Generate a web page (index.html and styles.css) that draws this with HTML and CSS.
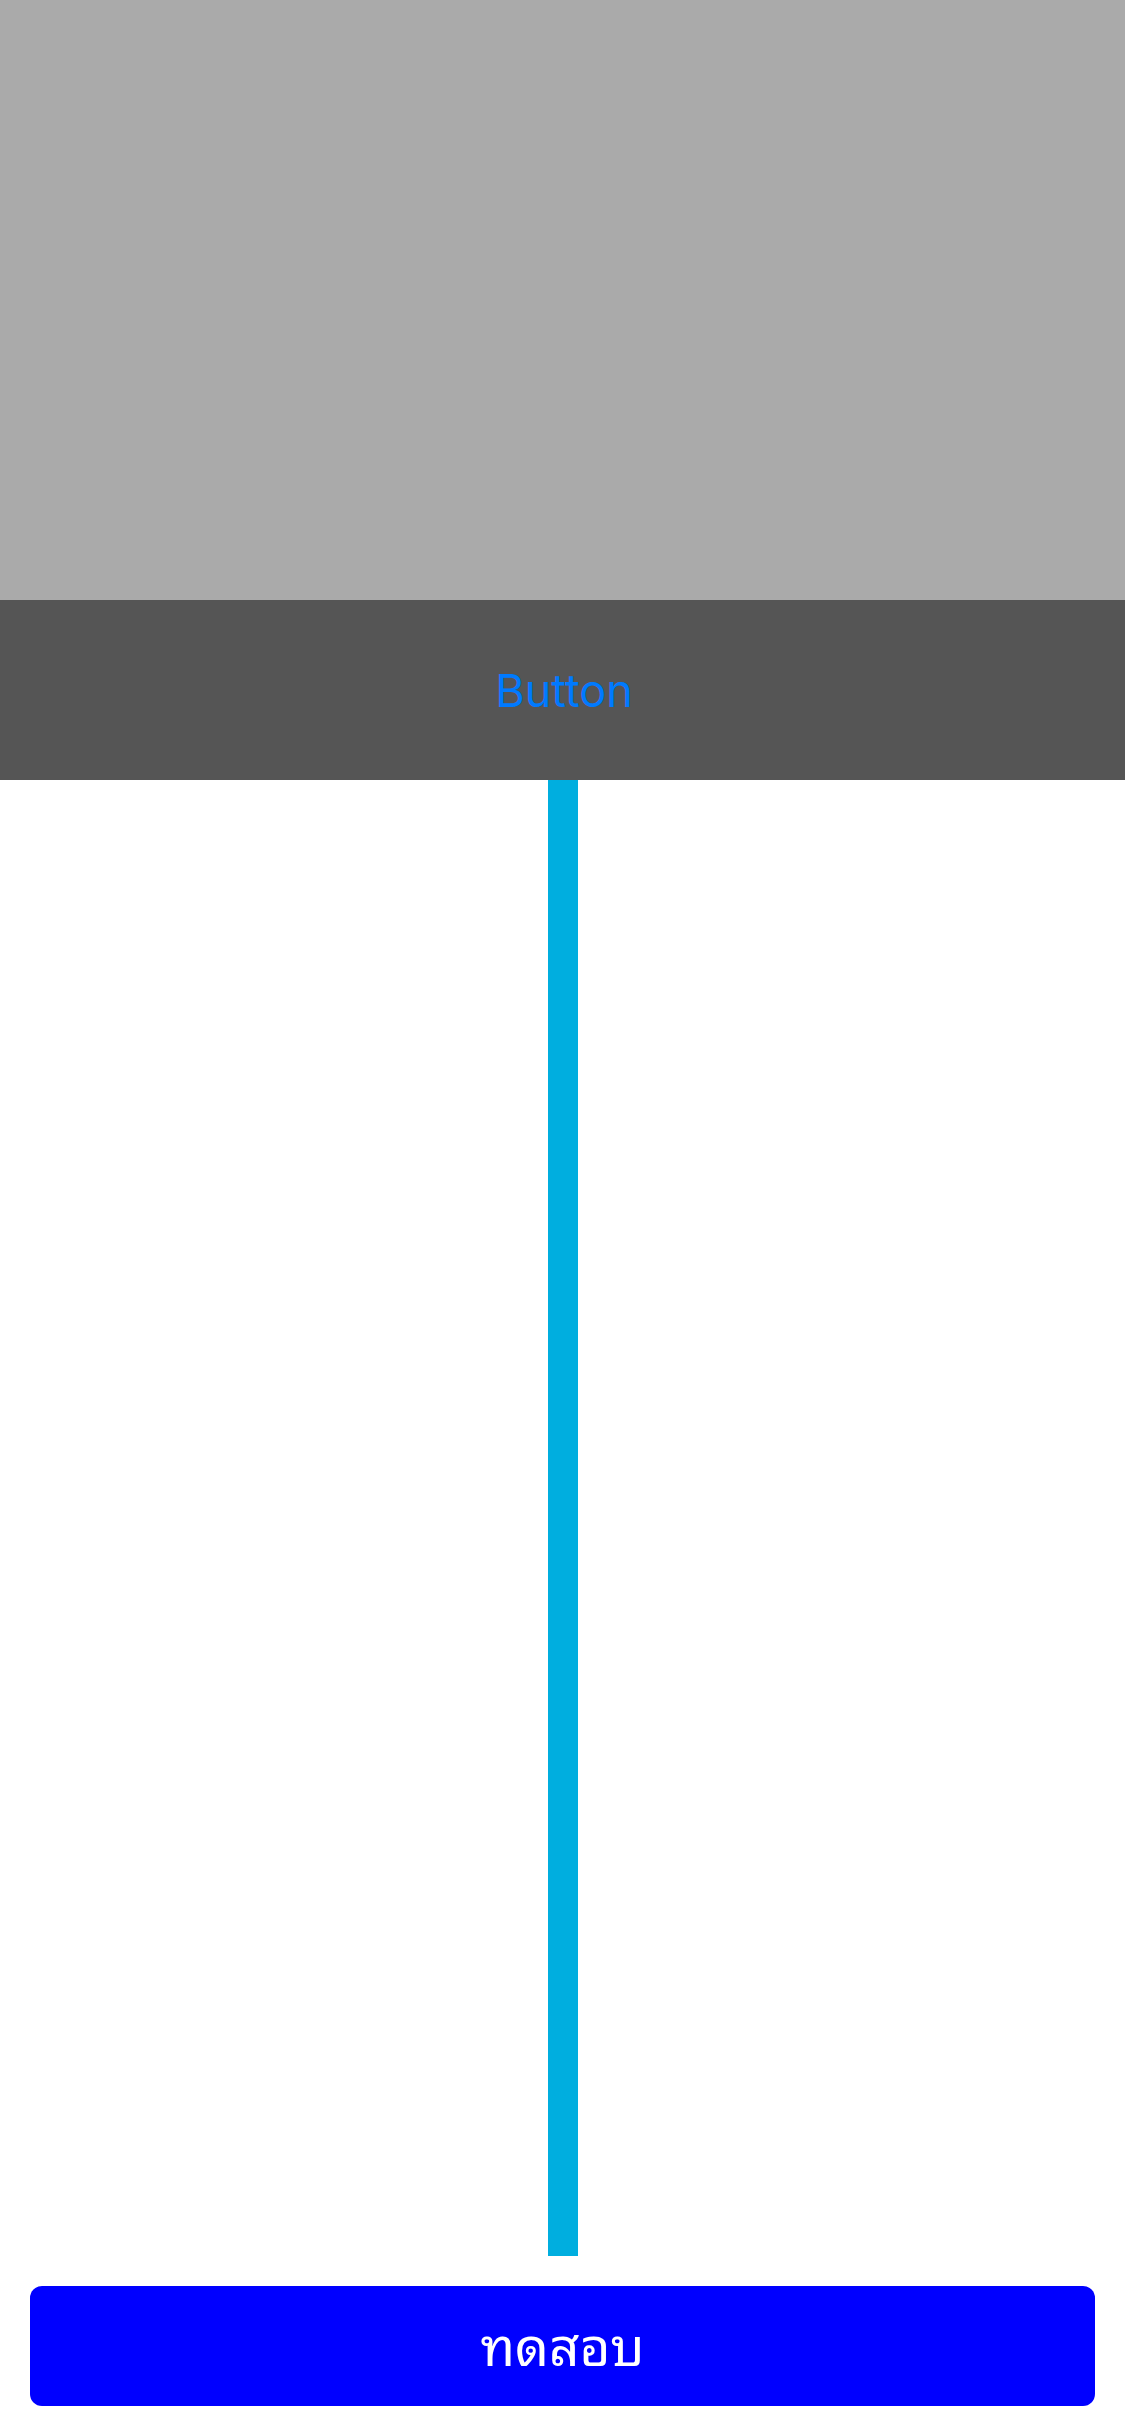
FILE: index.html
```html
<!DOCTYPE html>
<html lang="th">
<head>
<meta charset="utf-8">
<link rel="stylesheet" href="styles.css">
</head>
<body>
<div class="screen">
  <div class="top"></div>
  <div class="bar">
    <span class="bar-button">Button</span>
  </div>
  <div class="middle">
    <div class="line"></div>
  </div>
  <div class="footer">
    <div class="cta">ทดสอบ</div>
  </div>
</div>
</body>
</html>
```
FILE: styles.css
```css
html, body {
  margin: 0;
  padding: 0;
  background: #ffffff;
}
.screen {
  width: 1125px;
  height: 2436px;
  display: flex;
  flex-direction: column;
  font-family: "Inter", "Noto Sans", "DejaVu Sans", sans-serif;
}
.top {
  height: 600px;
  background: #aaaaaa;
}
.bar {
  height: 180px;
  background: #555555;
  display: flex;
  align-items: center;
  justify-content: center;
}
.bar-button {
  color: #007aff;
  font-size: 45px;
  line-height: 1;
  padding-left: 3px;
  font-weight: 400;
}
.middle {
  height: 1476px;
  display: flex;
  justify-content: center;
  padding-left: 1px;
}
.line {
  width: 30px;
  background: #00aedf;
}
.footer {
  padding: 30px;
}
.cta {
  box-sizing: border-box;
  height: 120px;
  padding-bottom: 8px;
  background: #0000ff;
  border-radius: 12px;
  color: #ffffff;
  display: flex;
  align-items: center;
  justify-content: center;
  font-family: "Noto Sans Thai Looped", "Thonburi", "Loma", "Garuda", "Waree", "Norasi", "Noto Sans Thai", sans-serif;
  font-size: 53px;
  font-weight: 400;
}
```
